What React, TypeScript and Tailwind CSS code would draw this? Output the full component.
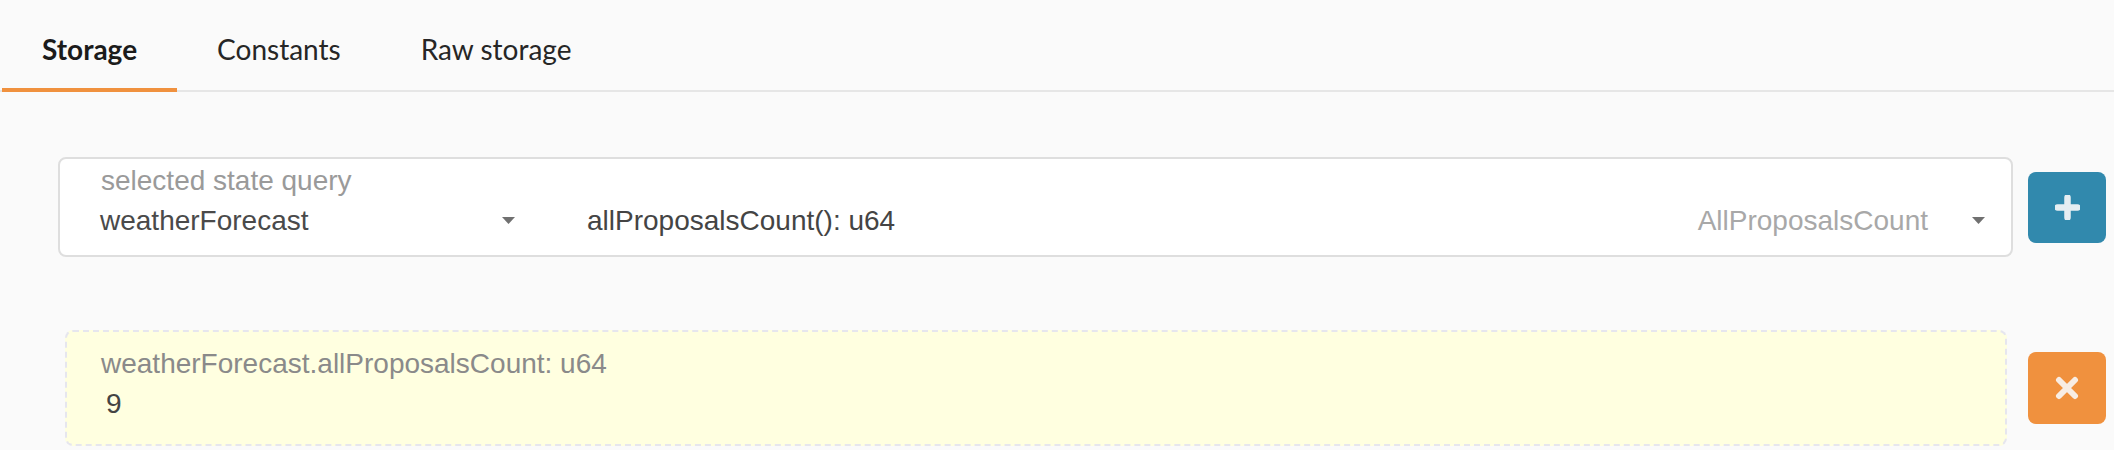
import React from 'react';

const tabs = ['Storage', 'Constants', 'Raw storage'];

function Caret() {
  return (
    <svg width="13" height="7" viewBox="0 0 13 7" className="shrink-0 fill-[#707070]">
      <path d="M0 0h13L6.5 7z" />
    </svg>
  );
}

export default function App() {
  return (
    <div className="min-h-screen w-full bg-[#fafafa] font-['Liberation_Sans',Arial,sans-serif]">
      {/* Tabs */}
      <div className="flex h-[92px] border-b-2 border-[#e6e6e6] pl-[2px] font-['Lato',sans-serif] text-[28px] leading-[31px]">
        {tabs.map((t, i) => (
          <div
            key={t}
            className={
              i === 0
                ? 'h-[92px] -mb-[2px] border-b-4 border-[#f0913e] px-[40px] pt-[34px] font-bold text-[#1b1b1b]'
                : 'h-[92px] -mb-[2px] px-[40px] pt-[34px] text-[#262626]'
            }
          >
            {t}
          </div>
        ))}
      </div>

      {/* Query selector */}
      <div className="mt-[65px] flex items-center gap-[15px] pl-[58px] pr-[8px]">
        <div className="flex h-[100px] flex-1 flex-col rounded-[8px] border-2 border-[#dedede] bg-white text-[28px] leading-[33px]">
          <div className="pl-[41px] pt-[5px] text-[#9a9a9a]">selected state query</div>
          <div className="mt-[7px] flex">
            <div className="flex w-[485px] items-center justify-between pl-[40px] pr-[30px] text-[#4a4a4a]">
              <span>weatherForecast</span>
              <Caret />
            </div>
            <div className="flex flex-1 items-center pl-[42px] pr-[26px]">
              <span className="flex-1 text-[#444]">allProposalsCount(): u64</span>
              <span className="mr-[44px] text-[#a8a8a8]">AllProposalsCount</span>
              <Caret />
            </div>
          </div>
        </div>
        <button className="flex h-[71px] w-[78px] items-center justify-center rounded-[8px] bg-[#3189ad]">
          <svg width="25" height="25" viewBox="0 0 25 25">
            <path d="M12.5 2.5v20M2.5 12.5h20" stroke="#e6eef2" strokeWidth="6.5" strokeLinecap="round" />
          </svg>
        </button>
      </div>

      {/* Result */}
      <div className="mt-[73px] flex items-center gap-[21px] pl-[65px] pr-[8px]">
        <div className="h-[116px] flex-1 rounded-[8px] border-2 border-dashed border-[#e6e6ee] bg-[#ffffe0] pt-[15px] text-[28px] leading-[33px]">
          <div className="pl-[34px] text-[#8a8a8a]">weatherForecast.allProposalsCount: u64</div>
          <div className="mt-[7px] pl-[39px] text-[#444]">9</div>
        </div>
        <button className="flex h-[72px] w-[78px] items-center justify-center rounded-[8px] bg-[#f0913e]">
          <svg width="24" height="24" viewBox="0 0 24 24">
            <path d="M4 4l16 16M20 4L4 20" stroke="#f8ede4" strokeWidth="6" strokeLinecap="round" />
          </svg>
        </button>
      </div>
    </div>
  );
}
